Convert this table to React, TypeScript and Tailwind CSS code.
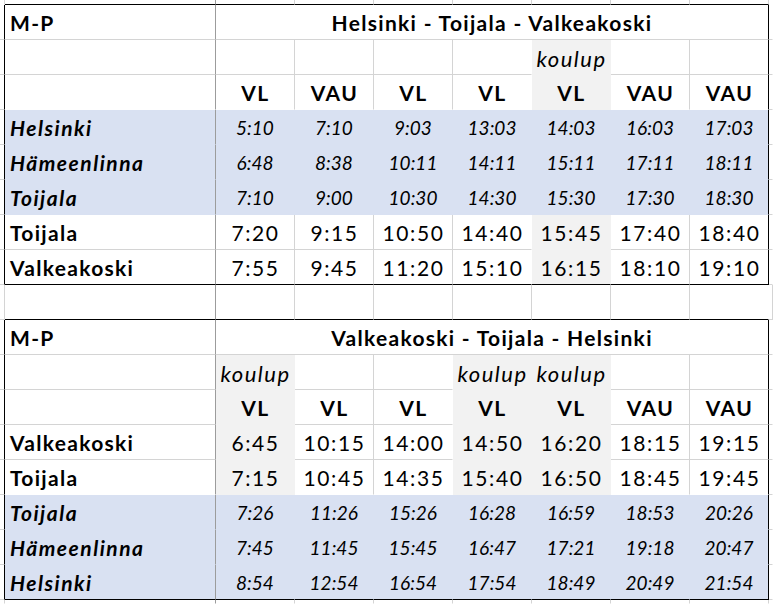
import React from 'react';

type Bg = 'w' | 'b' | 'g';
type Kind = 'title' | 'note' | 'train' | 'blue' | 'plain';

interface Row {
  kind: Kind;
  label: string;
  cells: string[];
  gray?: number[];
}

interface Table {
  title: string;
  rows: Row[];
}

const TABLES: Table[] = [
  {
    title: 'Helsinki - Toijala - Valkeakoski',
    rows: [
      { kind: 'title', label: 'M-P', cells: [] },
      { kind: 'note', label: '', cells: ['', '', '', '', 'koulup', '', ''], gray: [4] },
      { kind: 'train', label: '', cells: ['VL', 'VAU', 'VL', 'VL', 'VL', 'VAU', 'VAU'], gray: [4] },
      { kind: 'blue', label: 'Helsinki', cells: ['5:10', '7:10', '9:03', '13:03', '14:03', '16:03', '17:03'] },
      { kind: 'blue', label: 'Hämeenlinna', cells: ['6:48', '8:38', '10:11', '14:11', '15:11', '17:11', '18:11'] },
      { kind: 'blue', label: 'Toijala', cells: ['7:10', '9:00', '10:30', '14:30', '15:30', '17:30', '18:30'] },
      { kind: 'plain', label: 'Toijala', cells: ['7:20', '9:15', '10:50', '14:40', '15:45', '17:40', '18:40'], gray: [4] },
      { kind: 'plain', label: 'Valkeakoski', cells: ['7:55', '9:45', '11:20', '15:10', '16:15', '18:10', '19:10'], gray: [4] },
    ],
  },
  {
    title: 'Valkeakoski - Toijala - Helsinki',
    rows: [
      { kind: 'title', label: 'M-P', cells: [] },
      { kind: 'note', label: '', cells: ['koulup', '', '', 'koulup', 'koulup', '', ''], gray: [0, 3, 4] },
      { kind: 'train', label: '', cells: ['VL', 'VL', 'VL', 'VL', 'VL', 'VAU', 'VAU'], gray: [0, 3, 4] },
      { kind: 'plain', label: 'Valkeakoski', cells: ['6:45', '10:15', '14:00', '14:50', '16:20', '18:15', '19:15'], gray: [0, 3, 4] },
      { kind: 'plain', label: 'Toijala', cells: ['7:15', '10:45', '14:35', '15:40', '16:50', '18:45', '19:45'], gray: [0, 3, 4] },
      { kind: 'blue', label: 'Toijala', cells: ['7:26', '11:26', '15:26', '16:28', '16:59', '18:53', '20:26'] },
      { kind: 'blue', label: 'Hämeenlinna', cells: ['7:45', '11:45', '15:45', '16:47', '17:21', '19:18', '20:47'] },
      { kind: 'blue', label: 'Helsinki', cells: ['8:54', '12:54', '16:54', '17:54', '18:49', '20:49', '21:54'] },
    ],
  },
];

const BG: Record<Bg, string> = {
  w: 'bg-white',
  b: 'bg-[#d9e1f2]',
  g: 'bg-[#f2f2f2]',
};

const BR = {
  w: 'border-r-white',
  b: 'border-r-[#d9e1f2]',
  g: 'border-r-[#f2f2f2]',
  grid: 'border-r-[#d4d4d4]',
  frozen: 'border-r-[#9c9c9c]',
  black: 'border-r-black',
};

const BB = {
  w: 'border-b-white',
  b: 'border-b-[#d9e1f2]',
  g: 'border-b-[#f2f2f2]',
  grid: 'border-b-[#d4d4d4]',
  black: 'border-b-black',
};

// background of a cell (col -1 = label column)
function cellBg(row: Row | undefined, col: number): Bg {
  if (!row) return 'w';
  if (row.kind === 'blue') return 'b';
  if (row.kind === 'title') return 'w';
  if (col >= 0 && row.gray?.includes(col)) return 'g';
  return 'w';
}

function Plain({ r, b }: { r: string; b: string }) {
  return <div className={`border-r border-b ${r} ${b}`} />;
}

// empty strip above / between / below the tables
function Strip({ bottom, gap }: { bottom: 'black' | 'grid' | 'w'; gap?: boolean }) {
  const b = BB[bottom];
  return (
    <>
      <Plain r={BR.grid} b={gap ? BB.grid : BB.w} />
      <Plain r={BR.frozen} b={b} />
      {[0, 1, 2, 3, 4, 5].map((i) => (
        <Plain key={i} r={BR.grid} b={b} />
      ))}
      <Plain r={gap ? BR.w : BR.grid} b={b} />
      <Plain r={gap ? BR.grid : BR.w} b={gap ? BB.grid : BB.w} />
    </>
  );
}

function TimeTable({ table }: { table: Table }) {
  const { rows } = table;
  return (
    <>
      {rows.map((row, ri) => {
        const last = ri === rows.length - 1;
        const below = rows[ri + 1];
        const lbg = cellBg(row, -1);
        const labelBottom = last ? BB.black : lbg === 'w' && cellBg(below, -1) === 'w' ? BB.grid : BB[lbg];
        const labelCls =
          row.kind === 'blue' ? 'font-bold italic tracking-[1.5px]' : 'font-bold tracking-[1.3px]';

        return (
          <React.Fragment key={ri}>
            {/* outside column to the left */}
            <Plain r={BR.black} b={BB.grid} />

            {/* label column */}
            <div
              className={`flex items-center pl-[5px] text-[21px] border-r border-b ${BG[lbg]} ${BR.frozen} ${labelBottom} ${labelCls}`}
            >
              {row.label}
            </div>

            {row.kind === 'title' ? (
              <div
                className={`col-span-7 flex items-center justify-center text-[21px] font-bold tracking-[1.3px] bg-white border-r border-b ${BR.black} ${BB.grid}`}
              >
                {table.title}
              </div>
            ) : (
              row.cells.map((text, ci) => {
                const bg = cellBg(row, ci);
                const rightBg = cellBg(row, ci + 1);
                const downBg = cellBg(below, ci);
                let r: string;
                if (ci === 6) r = BR.black;
                else if (bg === 'w' && rightBg === 'w') r = BR.grid;
                else r = BR[bg];
                let b: string;
                if (last) b = BB.black;
                else if (bg === 'w' && downBg === 'w') b = BB.grid;
                else b = BB[bg];

                let txt = 'text-[21px] tracking-[1.6px] pl-[1px]';
                if (row.kind === 'train') txt = 'text-[21px] font-bold tracking-[1.4px] pl-[1px]';
                else if (row.kind === 'note') txt = 'text-[22px] italic tracking-[1.5px] pl-[1px] pt-[3px]';
                else if (row.kind === 'blue') txt = 'text-[19px] italic';

                return (
                  <div
                    key={ci}
                    className={`flex items-center justify-center border-r border-b ${BG[bg]} ${r} ${b} ${txt}`}
                  >
                    {text}
                  </div>
                );
              })
            )}

            {/* outside column to the right */}
            <Plain r={BR.w} b={BB.grid} />
          </React.Fragment>
        );
      })}
    </>
  );
}

export default function App() {
  return (
    <div className="w-[773px] h-[604px] overflow-hidden bg-white text-black font-['Lato',sans-serif]">
      <div className="grid grid-cols-[5px_211px_repeat(7,79px)_4px] grid-rows-[5px_repeat(17,35px)_4px] leading-none">
        <Strip bottom="black" />
        <TimeTable table={TABLES[0]} />
        <Strip bottom="black" gap />
        <TimeTable table={TABLES[1]} />
        <Strip bottom="w" />
      </div>
    </div>
  );
}
